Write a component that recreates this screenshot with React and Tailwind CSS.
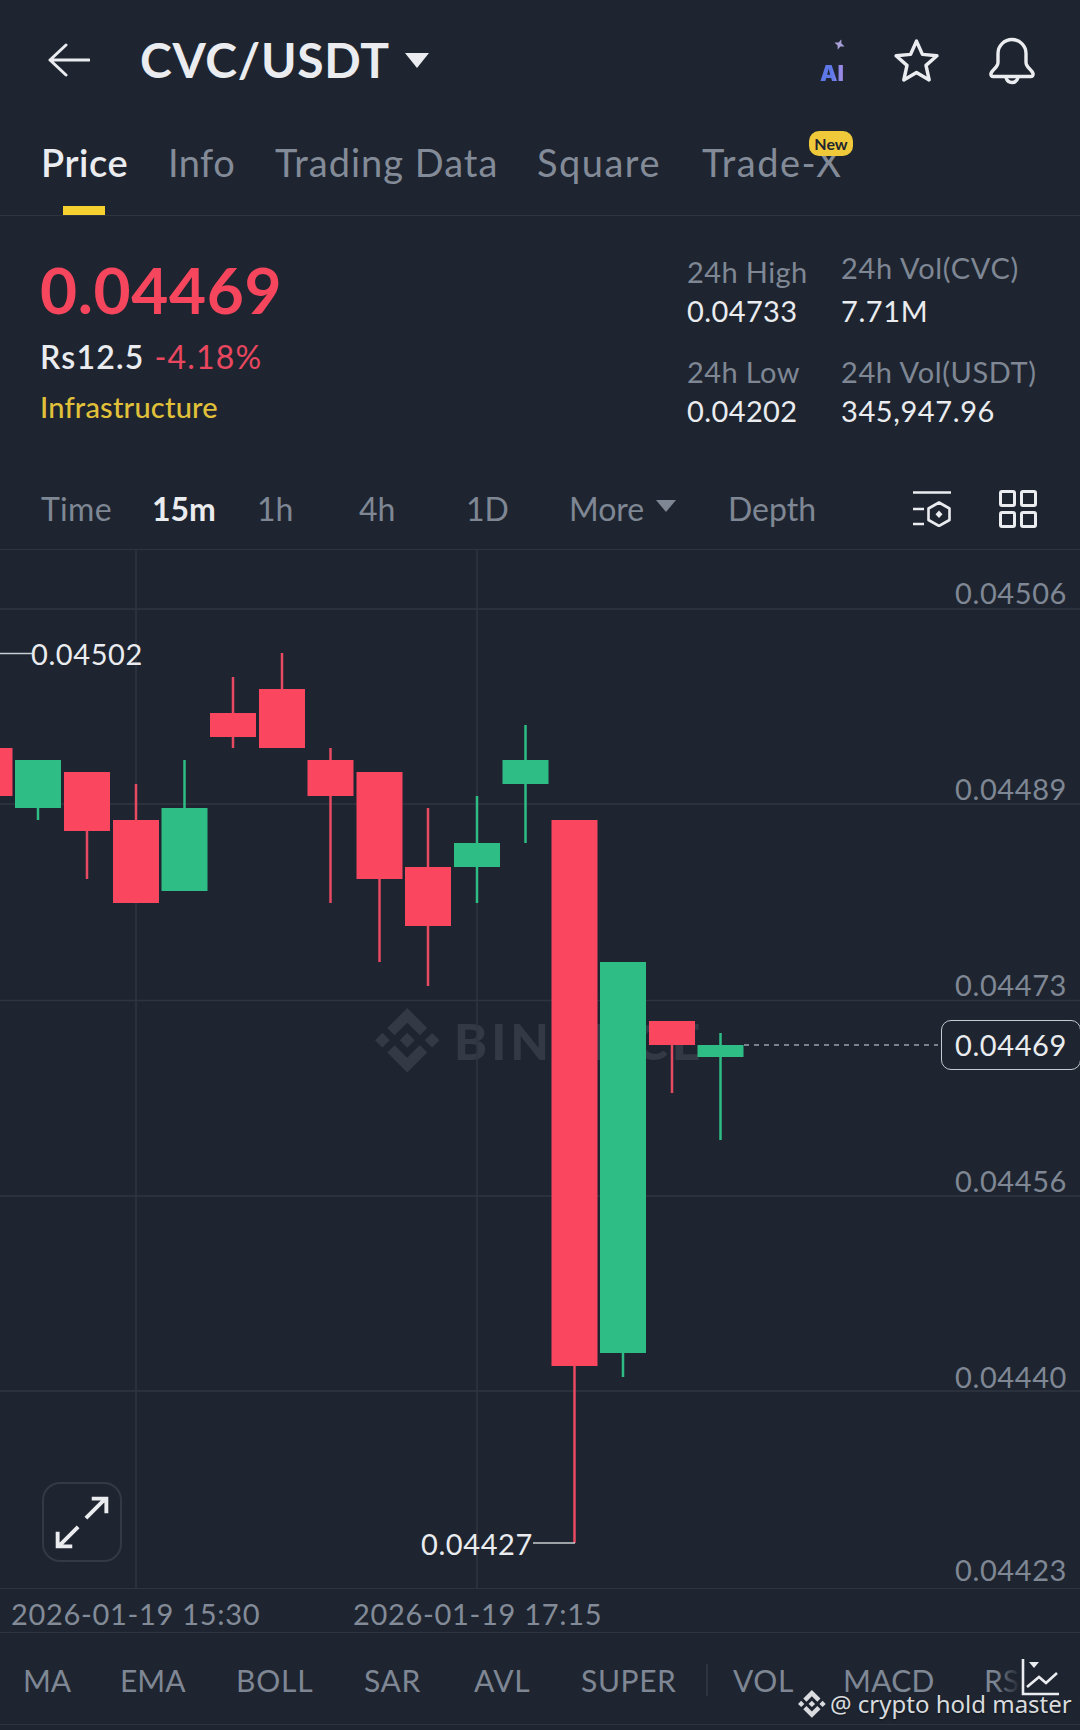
const FONT = "font-['Lato','Open_Sans',sans-serif]";

const tabs = [
  { label: "Price", cls: "w-[127px] text-[#eaecef] font-semibold tracking-[0.6px]" },
  { label: "Info", cls: "w-[107px] text-[#848b98] tracking-[0.4px]" },
  { label: "Trading Data", cls: "w-[262px] text-[#848b98] tracking-[1px]" },
  { label: "Square", cls: "w-[165px] text-[#848b98] tracking-[1.5px]" },
  { label: "Trade-X", cls: "w-[140px] text-[#848b98] tracking-[1.5px]" },
];

const intervals = [
  { label: "Time", cls: "w-[111px] text-[#7f8794] tracking-[0.3px]" },
  { label: "15m", cls: "w-[105px] text-[#eaecef] font-bold" },
  { label: "1h", cls: "w-[102px] text-[#7f8794]" },
  { label: "4h", cls: "w-[107px] text-[#7f8794]" },
  { label: "1D", cls: "w-[103px] text-[#7f8794]" },
];

const indicators = [
  { label: "MA", cls: "w-[97px]" },
  { label: "EMA", cls: "w-[116px]" },
  { label: "BOLL", cls: "w-[128px] tracking-[0.8px]" },
  { label: "SAR", cls: "w-[110px] tracking-[0.6px]" },
  { label: "AVL", cls: "w-[107px] tracking-[0.6px]" },
  { label: "SUPER", cls: "w-[125px] tracking-[0.6px]" },
];

// page-y coordinates, the svg viewBox starts at y=550
const candles = [
  { x: -10.5, up: false, top: 748, bottom: 796 },
  { x: 38, up: true, top: 760, bottom: 808, low: 820 },
  { x: 87, up: false, top: 772, bottom: 831, low: 879 },
  { x: 136, up: false, top: 820, bottom: 903, high: 784 },
  { x: 184.5, up: true, top: 808, bottom: 891, high: 760 },
  { x: 233, up: false, top: 713, bottom: 737, high: 677, low: 748 },
  { x: 282, up: false, top: 689, bottom: 748, high: 653 },
  { x: 330.5, up: false, top: 760, bottom: 796, high: 748, low: 903 },
  { x: 379.5, up: false, top: 772, bottom: 879, low: 962 },
  { x: 428, up: false, top: 867, bottom: 926, high: 808, low: 986 },
  { x: 477, up: true, top: 843, bottom: 867, high: 796, low: 903 },
  { x: 525.5, up: true, top: 760, bottom: 784, high: 725, low: 843 },
  { x: 574.5, up: false, top: 820, bottom: 1366, low: 1543 },
  { x: 623, up: true, top: 962, bottom: 1353, low: 1377 },
  { x: 672, up: false, top: 1021, bottom: 1045, low: 1093 },
  { x: 720.5, up: true, top: 1045, bottom: 1057, high: 1033, low: 1140 },
];

const gridY = [609, 804, 1000.5, 1196, 1391];
const gridX = [136, 477];

function BinanceMark({ className }) {
  return (
    <svg viewBox="0 0 126.61 126.61" className={className} fill="currentColor">
      <path d="M38.171 53.203 62.759 28.616l24.6 24.6 14.306-14.306L62.759 0 23.864 38.896zM0 62.759l14.307-14.307 14.306 14.307-14.306 14.306zM38.171 72.315l24.588 24.587 24.6-24.6 14.313 14.3-.007.007-38.906 38.909-38.895-38.892-.02-.02zM96.905 62.765l14.307-14.307 14.306 14.306-14.306 14.307z" />
      <path d="M77.27 62.75h.006L62.759 48.233 52.03 58.962l-1.233 1.233-2.541 2.541-.02.02.02.021 14.503 14.503 14.517-14.517.007-.008z" />
    </svg>
  );
}

function Header() {
  return (
    <div className="h-[120px] flex items-center pl-[48px] pr-[45px]">
      <svg viewBox="0 0 42 34" className="w-[42px] h-[34px] shrink-0" fill="none" stroke="#eaecef" strokeWidth="3" strokeLinecap="round" strokeLinejoin="round">
        <path d="M41 17H2M18 2 2 17l16 15" />
      </svg>
      <span className="ml-[50px] text-[48px] leading-none font-bold tracking-[0.7px] text-[#eaecef]">CVC/USDT</span>
      <span className="ml-[15px] w-0 h-0 border-l-[12px] border-r-[12px] border-t-[15px] border-l-transparent border-r-transparent border-t-[#eaecef]" />
      <div className="ml-auto flex items-center">
        <div className="relative w-[26px] h-[44px] mt-[2px]">
          <svg viewBox="0 0 12 12" className="absolute right-[1px] top-0 w-[11px] h-[11px] rotate-[20deg]">
            <path d="M6 0 7.6 4.4 12 6 7.6 7.600 6 12 4.400 7.600 0 6 4.400 4.400z" fill="#a9a0d8" />
          </svg>
          <span className="absolute left-0 bottom-0 font-['Inter',sans-serif] text-[22px] leading-[20px] font-black bg-gradient-to-r from-[#5f78e8] from-50% to-[#a98ee8] bg-clip-text text-transparent">
            AI
          </span>
        </div>
        <svg viewBox="0 0 46 44" className="ml-[47px] w-[47px] h-[45px]" fill="none" stroke="#eaecef" strokeWidth="3.4" strokeLinejoin="round">
          <path d="M23 3 28.8 16 43 17.4 32.3 26.8 35.4 41 23 33.700 10.600 41 13.700 26.800 3 17.400 17.200 16z" />
        </svg>
        <svg viewBox="0 0 46 48" className="ml-[49px] w-[46px] h-[49px]" fill="none" stroke="#eaecef" strokeWidth="3.4" strokeLinecap="round" strokeLinejoin="round">
          <path d="M9 17a14 14 0 0 1 28 0v9c0 5 6 7 7 11 .4 1.7-.6 3-2.2 3H4.2C2.6 40 1.6 38.7 2 37c1-4 7-6 7-11z" />
          <path d="M17 41c1 3.500 3 5 6 5s5-1.500 6-5" />
        </svg>
      </div>
    </div>
  );
}

function Tabs() {
  return (
    <div className="relative h-[96px] flex items-start pl-[41px] border-b border-[#2f3540]">
      {tabs.map((tab) => (
        <div key={tab.label} className={`${tab.cls} shrink-0 whitespace-nowrap text-[38px] leading-[84px]`}>
          {tab.label}
        </div>
      ))}
      <span className="absolute left-[63px] bottom-0 w-[42px] h-[9px] bg-[#f5d02f]" />
      <span className="absolute left-[809px] top-[11px] h-[25px] w-[44px] rounded-[10px] bg-[#f0c93a] text-[#1e2530] text-[16px] leading-[25px] font-bold text-center">
        New
      </span>
    </div>
  );
}

function Stat({ label, value, className = "" }) {
  return (
    <div className={className}>
      <div className="h-[38px] text-[29px] leading-[38px] tracking-[0.4px] text-[#7f8794]">{label}</div>
      <div className="h-[40px] text-[29px] leading-[40px] tracking-[0.4px] text-[#eaecef]">{value}</div>
    </div>
  );
}

function Summary() {
  return (
    <div className="h-[254px] flex justify-between pl-[40px]">
      <div className="pt-[42px]">
        <div className="text-[64px] leading-[64px] font-bold tracking-[0.6px] text-[#f6465d]">0.04469</div>
        <div className="mt-[17px] flex items-center h-[36px] text-[32px] leading-[36px] tracking-[1.2px]">
          <span className="font-semibold text-[#eaecef]">Rs12.5</span>
          <span className="ml-[10px] text-[#e8475f]">-4.18%</span>
        </div>
        <div className="mt-[14px] text-[29px] leading-[36px] font-medium tracking-[0.2px] text-[#e2c13a]">Infrastructure</div>
      </div>
      <div className="flex">
        <div className="w-[154px] pt-[37px]">
          <Stat label="24h High" value="0.04733" />
          <Stat label="24h Low" value="0.04202" className="mt-[22px]" />
        </div>
        <div className="w-[239px] pt-[32px]">
          <div className="h-[40px] text-[29px] leading-[40px] tracking-[0.7px] text-[#7f8794]">24h Vol(CVC)</div>
          <div className="mt-[3px] h-[40px] text-[29px] leading-[40px] tracking-[0.6px] text-[#eaecef]">7.71M</div>
          <div className="mt-[22px] h-[38px] text-[29px] leading-[38px] tracking-[0.6px] text-[#7f8794]">24h Vol(USDT)</div>
          <div className="h-[40px] text-[29px] leading-[40px] tracking-[0.6px] text-[#eaecef]">345,947.96</div>
        </div>
      </div>
    </div>
  );
}

function Toolbar() {
  return (
    <div className="h-[80px] flex items-center pl-[41px] pb-[2px] border-b border-[#2f3540] text-[32px]">
      {intervals.map((item) => (
        <div key={item.label} className={`${item.cls} shrink-0`}>
          {item.label}
        </div>
      ))}
      <div className="w-[159px] shrink-0 flex items-center text-[#7f8794]">
        More
        <span className="ml-[12px] mb-[6px] w-0 h-0 border-l-[10px] border-r-[10px] border-t-[12px] border-l-transparent border-r-transparent border-t-[#7f8794]" />
      </div>
      <div className="w-[185px] shrink-0 text-[#7f8794]">Depth</div>
      <svg viewBox="0 0 38 36" className="w-[38px] h-[36px]" fill="none" stroke="#eaecef" strokeWidth="2.6">
        <path d="M0 1.500H38M0 18H11M0 33H11" />
        <path d="M26 11.500 36.500 17.500V29L26 35 15.500 29V17.500z" strokeLinejoin="round" />
        <path d="M26 19.500 29.500 23.200 26 27 22.500 23.200z" fill="#eaecef" stroke="none" />
      </svg>
      <svg viewBox="0 0 38 38" className="ml-[48px] w-[38px] h-[38px]" fill="none" stroke="#eaecef" strokeWidth="3">
        <rect x="1.500" y="1.500" width="14" height="14" rx="1.500" />
        <rect x="22.500" y="1.500" width="14" height="14" rx="1.500" />
        <rect x="1.500" y="22.500" width="14" height="14" rx="1.500" />
        <rect x="22.500" y="22.500" width="14" height="14" rx="1.500" />
      </svg>
    </div>
  );
}

function CandleChart() {
  return (
    <svg viewBox="0 550 1080 1038" className="absolute left-0 top-0 w-[1080px] h-[1038px]">
      {gridY.map((y) => (
        <line key={y} x1="0" x2="1080" y1={y} y2={y} stroke="#2f3540" strokeWidth="1.500" />
      ))}
      {gridX.map((x) => (
        <line key={x} x1={x} x2={x} y1="550" y2="1588" stroke="#2f3540" strokeWidth="1.500" />
      ))}
      {candles.map((c) => {
        const color = c.up ? "#2ebd85" : "#fb4660";
        const wick = c.up ? "#2ebd85" : "#e84a62";
        return (
          <g key={c.x}>
            {c.high && <line x1={c.x} x2={c.x} y1={c.high} y2={c.top} stroke={wick} strokeWidth="2.500" />}
            {c.low && <line x1={c.x} x2={c.x} y1={c.bottom} y2={c.low} stroke={wick} strokeWidth="2.500" />}
            <rect x={c.x - 23} y={c.top} width="46" height={c.bottom - c.top} fill={color} />
          </g>
        );
      })}
      <line x1="0" x2="32" y1="653.500" y2="653.500" stroke="#c9ccd1" strokeWidth="1.500" />
      <line x1="533" x2="575" y1="1543" y2="1543" stroke="#c9ccd1" strokeWidth="1.500" />
      <line x1="744" x2="938" y1="1045" y2="1045" stroke="#9aa0a9" strokeWidth="1.500" strokeDasharray="5 5" />
    </svg>
  );
}

function Chart() {
  const axis = [
    { label: "0.04506", cls: "top-[23px]" },
    { label: "0.04489", cls: "top-[219px]" },
    { label: "0.04473", cls: "top-[415px]" },
    { label: "0.04456", cls: "top-[611px]" },
    { label: "0.04440", cls: "top-[807px]" },
    { label: "0.04423", cls: "top-[1000px]" },
  ];

  return (
    <div className="relative h-[1039px] border-b border-[#2f3540] overflow-hidden">
      {/* BINANCE mark sits behind the candles */}
      <div className="absolute left-[375px] top-[458px] flex items-center text-[#333a45]">
        <BinanceMark className="w-[65px] h-[65px]" />
        <span className="ml-[14px] text-[50px] leading-none font-black tracking-[4px]">BINANCE</span>
      </div>
      <CandleChart />
      {axis.map((a) => (
        <span key={a.label} className={`absolute right-[13px] ${a.cls} text-[29px] leading-[40px] tracking-[0.6px] text-[#7f8794]`}>
          {a.label}
        </span>
      ))}
      <span className="absolute left-[31px] top-[84px] text-[29px] leading-[40px] tracking-[0.6px] text-[#eaecef]">0.04502</span>
      <span className="absolute left-[421px] top-[974px] text-[29px] leading-[40px] tracking-[0.6px] text-[#eaecef]">0.04427</span>
      <div className="absolute left-[941px] top-[470px] w-[140px] h-[50px] rounded-[10px] border-[1.5px] border-[#c6cad0] bg-[#1e2530] pl-[13px] text-[29px] leading-[47px] tracking-[0.6px] text-[#eaecef]">
        0.04469
      </div>
      <div className="absolute left-[42px] top-[932px] w-[80px] h-[80px] rounded-[18px] border-2 border-[#333a45] flex items-center justify-center">
        <svg viewBox="0 0 78 78" className="w-[78px] h-[78px]" fill="none" stroke="#eaecef" strokeWidth="4">
          <path d="M43 35 63 15M49 15H64V30M35 44 15 64M14 49V64H29" />
        </svg>
      </div>
    </div>
  );
}

function DateRow() {
  return (
    <div className="h-[44px] flex items-center border-b border-[#2f3540] pl-[11px] pt-[7px] text-[29px] tracking-[0.7px] text-[#848b98]">
      <span className="w-[342px] shrink-0">2026-01-19 15:30</span>
      <span>2026-01-19 17:15</span>
    </div>
  );
}

function IndicatorBar() {
  return (
    <div className="relative h-[92px] flex items-center overflow-hidden border-b border-[#2f3540] pl-[23px] pt-[3px] text-[30px] text-[#7f8794]">
      {indicators.map((item) => (
        <div key={item.label} className={`${item.cls} shrink-0`}>
          {item.label}
        </div>
      ))}
      <span className="shrink-0 w-[2px] h-[32px] bg-[#2f3540]" />
      <div className="ml-[25px] w-[110px] shrink-0 tracking-[0.6px]">VOL</div>
      <div className="w-[141px] shrink-0 tracking-[0.3px]">MACD</div>
      <div className="shrink-0">RSI</div>
      <div className="absolute right-0 top-0 bottom-0 w-[85px] bg-gradient-to-r from-transparent to-[#1e2530] to-30%" />
      <svg viewBox="0 0 38 38" className="absolute left-[1021px] top-[26px] w-[38px] h-[38px]" fill="none" stroke="#eaecef" strokeWidth="2.600">
        <path d="M2 0V35H38" />
        <path d="M6 28 18 18 25 24 36 14" />
        <path d="M8 3H18L13 9z" fill="#eaecef" stroke="none" />
      </svg>
    </div>
  );
}

export default function App() {
  return (
    <div className={`${FONT} relative w-[1080px] h-[1730px] overflow-hidden bg-[#1e2530]`}>
      <Header />
      <Tabs />
      <Summary />
      <Toolbar />
      <Chart />
      <DateRow />
      <IndicatorBar />
      <div className="absolute left-[798px] top-[1689px] flex items-center font-['Noto_Sans',sans-serif] text-[#d9dbde] [text-shadow:0_1px_2px_rgba(0,0,0,0.4)]">
        <BinanceMark className="w-[28px] h-[28px]" />
        <span className="ml-[4px] text-[24px] leading-[30px] whitespace-nowrap">@ crypto hold master</span>
      </div>
    </div>
  );
}
